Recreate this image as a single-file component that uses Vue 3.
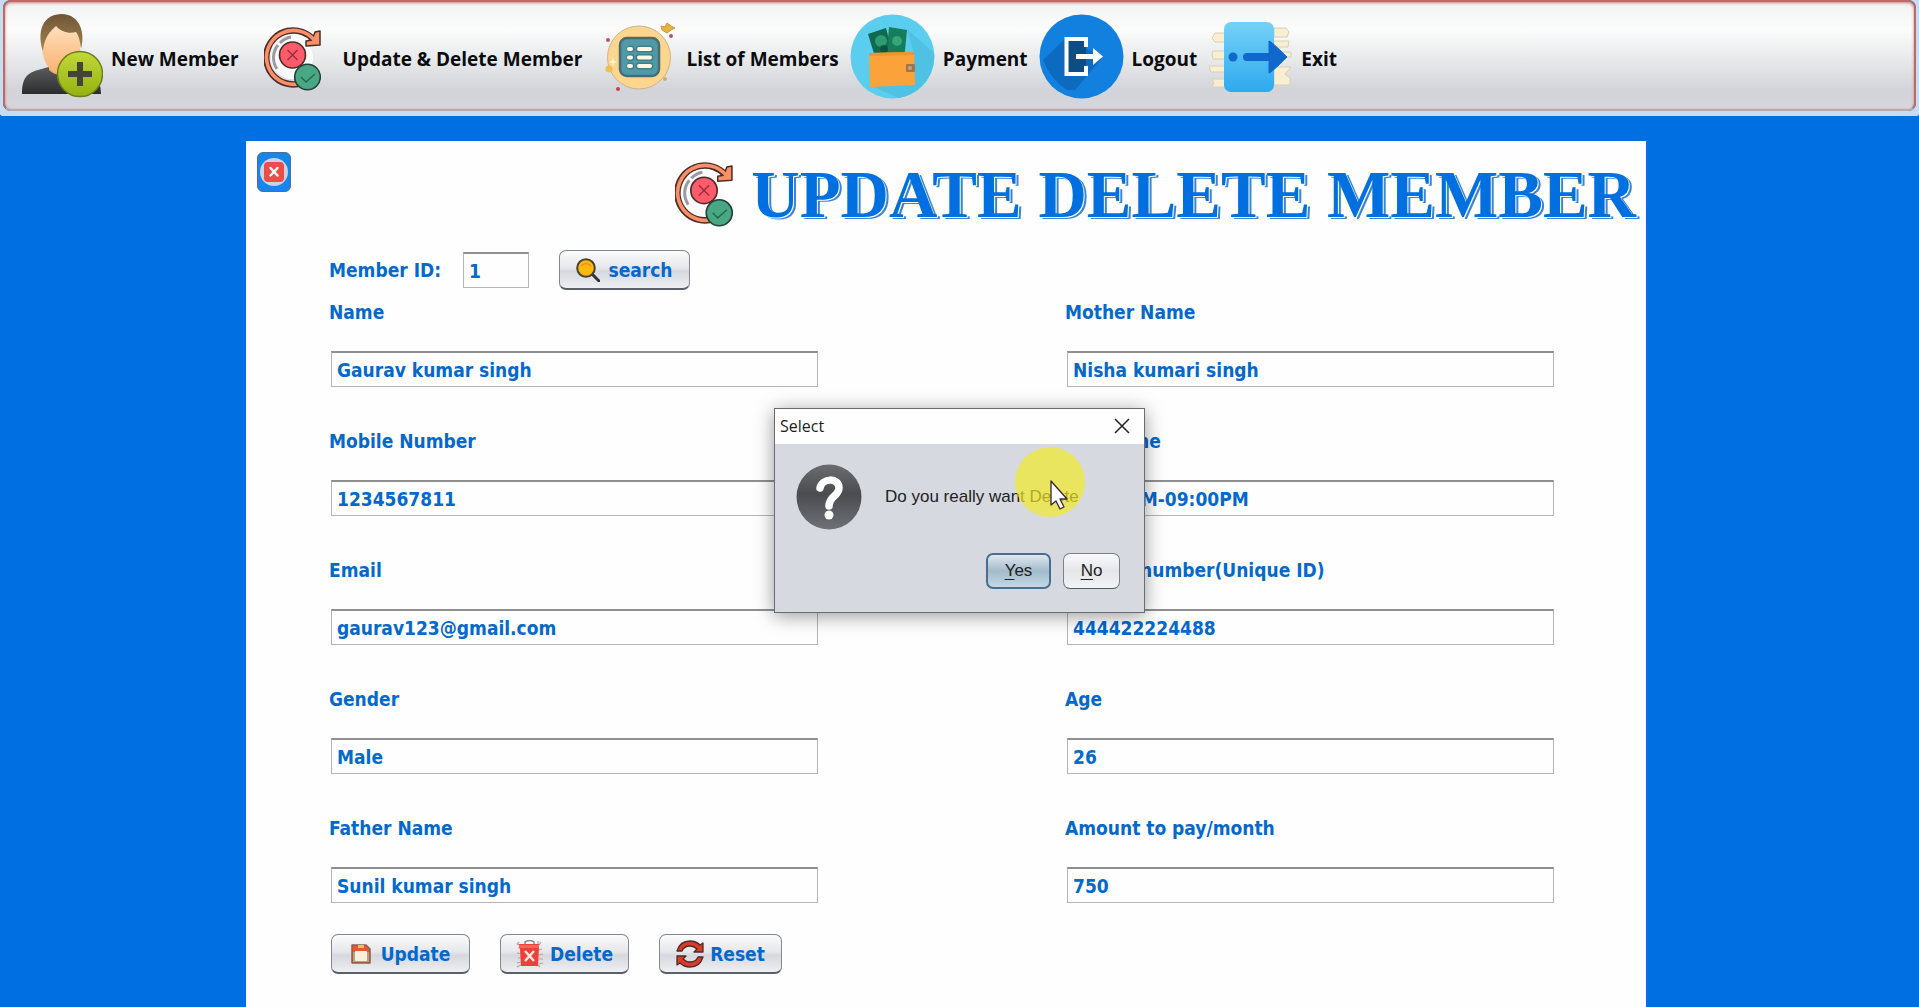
<script setup>
import { ref } from 'vue'

const menu = [
  { id: 'new', label: 'New Member' },
  { id: 'update', label: 'Update & Delete Member' },
  { id: 'list', label: 'List of Members' },
  { id: 'payment', label: 'Payment' },
  { id: 'logout', label: 'Logout' },
  { id: 'exit', label: 'Exit' },
]

const memberId = ref('1')
const fields = ref([
  { id: 'name', label: 'Name', value: 'Gaurav kumar singh' },
  { id: 'mother', label: 'Mother Name', value: 'Nisha kumari singh' },
  { id: 'mobile', label: 'Mobile Number', value: '1234567811' },
  { id: 'time', label: 'Gym Time', value: '06:00AM-09:00PM' },
  { id: 'email', label: 'Email', value: 'gaurav123@gmail.com' },
  { id: 'aadhar', label: 'Aadhar number(Unique ID)', value: '444422224488' },
  { id: 'gender', label: 'Gender', value: 'Male' },
  { id: 'age', label: 'Age', value: '26' },
  { id: 'father', label: 'Father Name', value: 'Sunil kumar singh' },
  { id: 'amount', label: 'Amount to pay/month', value: '750' },
])
</script>

<template>
  <div class="app">
    <svg class="defs" aria-hidden="true">
      <defs>
        <linearGradient id="hair" x1="0" y1="0" x2="0" y2="1"><stop offset="0" stop-color="#6f5638" /><stop offset="1" stop-color="#a5834f" /></linearGradient>
        <linearGradient id="skin" x1="0" y1="0" x2="0" y2="1"><stop offset="0" stop-color="#ffe0bd" /><stop offset="1" stop-color="#f9b070" /></linearGradient>
        <linearGradient id="suit" x1="0" y1="0" x2="0" y2="1"><stop offset="0" stop-color="#5e5f61" /><stop offset="1" stop-color="#2b2c2e" /></linearGradient>
        <linearGradient id="plus" x1="0" y1="0" x2="0" y2="1"><stop offset="0" stop-color="#c3d838" /><stop offset="1" stop-color="#93b210" /></linearGradient>
        <linearGradient id="door" x1="0" y1="0" x2="0" y2="1"><stop offset="0" stop-color="#74d2f7" /><stop offset="1" stop-color="#2fa9ee" /></linearGradient>
        <linearGradient id="ask" x1="0" y1="0" x2="0" y2="1"><stop offset="0" stop-color="#6b6c6f" /><stop offset="0.45" stop-color="#4b4c50" /><stop offset="1" stop-color="#6d7076" /></linearGradient>
        <symbol id="refresh" viewBox="0 0 57 64">
          <circle cx="28" cy="31" r="21" fill="#fbfbfb" />
          <path d="M13 42a20 20 0 0 1 1-24M16 16a19 19 0 0 1 11-6" fill="none" stroke="#9a9ca2" stroke-width="3" />
          <path d="M34 57A27 27 0 1 1 49 12" fill="none" stroke="#4a2c29" stroke-width="6.500" />
          <path d="M51 5l5-1v14l-14 1v-5l6-1z" fill="#fa8f68" stroke="#4a2c29" stroke-width="1.500" stroke-linejoin="round" />
          <path d="M34 57A27 27 0 1 1 51 14" fill="none" stroke="#fa8f68" stroke-width="3.600" />
          <circle cx="28.500" cy="28" r="13" fill="#fb5b6b" stroke="#4a2c29" stroke-width="1.600" />
          <path d="M23.500 23l10 10m0-10l-10 10" stroke="#9c2b3b" stroke-width="1.400" />
          <circle cx="43.500" cy="50" r="12.800" fill="#48a883" stroke="#243e38" stroke-width="1.600" />
          <path d="M37 50l5 5 9-8" fill="none" stroke="#246b52" stroke-width="1.500" />
        </symbol>
      </defs>
    </svg>

    <nav class="toolbar" aria-label="Main menu">
      <button v-for="m in menu" :key="m.id" type="button" class="menu">
        <svg class="menu-icon" viewBox="0 0 85 85" aria-hidden="true">
          <g v-if="m.id === 'new'">
            <path d="M4 80c0-16 5-21 16-24l14-4h13l14 4c14 3 22 8 22 24z" fill="url(#suit)" />
            <path d="M31 48h20v8q-10 9-20 0z" fill="#f5ae70" />
            <path d="M24 18q19-14 38 0v18c-2 14-9 24-19 24s-17-10-19-24z" fill="url(#skin)" />
            <path d="M25 37c-5-14-4-36 18-37 21 0 24 22 20 35-1-8-2-13-5-17-7 2-15 0-20-6-5 5-11 9-13 25z" fill="url(#hair)" />
            <circle cx="62" cy="60" r="22.500" fill="url(#plus)" stroke="#6c7e1b" stroke-width="1.500" />
            <path d="M62 48v24M50 60h24" stroke="#444536" stroke-width="6" />
          </g>
          <use v-else-if="m.id === 'update'" href="#refresh" x="14" y="13" width="57" height="64" />
          <g v-else-if="m.id === 'list'">
            <circle cx="46" cy="43.500" r="31.500" fill="#fbd68f" stroke="#cdb38a" stroke-width="1" />
            <rect x="27" y="24" width="39" height="38" rx="7" fill="#4f9aa6" stroke="#4c6a72" stroke-width="2.500" />
            <path d="M37 35h1m8 0h11M37 43.500h1m8 0h11M37 52h1m8 0h11" fill="none" stroke="#3f7f8c" stroke-width="7" stroke-linecap="round" />
            <path d="M36 35h2m8 0h11M36 43.500h2m8 0h11M36 52h2m8 0h11" fill="none" stroke="#fff7e4" stroke-width="4" stroke-linecap="round" />
            <path d="M74 9l4 3 4 2-4 2-4 3-5-3-1-4 4 1z" fill="#e9b339" stroke="#c39a45" stroke-width="1" />
            <circle cx="16" cy="55" r="3.500" fill="#efbf52" />
            <circle cx="15" cy="26" r="2" fill="#b65560" /><circle cx="78" cy="22" r="2" fill="#b65560" />
            <circle cx="25" cy="75" r="2" fill="#c0454e" /><circle cx="72" cy="65" r="2" fill="#d5ac67" />
            <path d="M20 43l1 4 3 1-3 1-1 4-1-4-3-1 3-1z" fill="#fff6dd" />
          </g>
          <g v-else-if="m.id === 'payment'">
            <circle cx="42.500" cy="42.500" r="42" fill="#5bcdee" />
            <path d="M57 15l27 24a42 42 0 0 1-35 45L22 72l42-33z" fill="#45b9dc" opacity=".55" />
            <path d="M18 20l18-6 8 30-18 2z" fill="#10694f" /><path d="M39 13l18 3-3 31-18-1z" fill="#157d5b" />
            <circle cx="31" cy="27" r="6" fill="#2d9b70" /><circle cx="47" cy="27" r="5" fill="#36a678" /><circle cx="34" cy="35" r="4" fill="#0b5641" />
            <path d="M19 39l45-1 1 33-45 2z" fill="#fba23a" />
            <path d="M19 39l45-1v3l-45 1z" fill="#ee9430" />
            <rect x="56" y="50" width="9" height="8" rx="1" fill="#9d7650" /><circle cx="60" cy="54" r="2" fill="#c9a27b" />
          </g>
          <g v-else-if="m.id === 'logout'">
            <circle cx="42.500" cy="42.500" r="42" fill="#1280df" />
            <path d="M27 24L4 46q8 20 24 30l8 0 28-33z" fill="#0b5fae" opacity=".65" />
            <path d="M27 25h20v36H27z" fill="#0d4d86" />
            <path d="M47 33v-8H27.500v35H47v-8" fill="none" stroke="#fff" stroke-width="4" />
            <path d="M37 42.500h20" stroke="#fff" stroke-width="5" /><path d="M54 34l10 8.500L54 51z" fill="#fff" />
          </g>
          <g v-else>
            <path d="M7 19h10v9H7l-3-4zM5 37h12v8H5l-1-4zM1 52h16v6H3zM4 65h13v8H4l2-4zM66 14h12l3 4-2 5H66zM66 27h15l-1 6H66zM66 38h17v5H66zM66 53h17l-6 7 5 4v7H66z" fill="#f8efd2" stroke="#d8cfb4" stroke-width="1" />
            <rect x="16" y="8" width="50" height="70" rx="7" fill="url(#door)" />
            <circle cx="25" cy="43" r="4.500" fill="#1067cc" /><path d="M39 43h27" stroke="#1067cc" stroke-width="8" stroke-linecap="round" />
            <path d="M61 27q2 0 18 16Q63 59 61 59z" fill="#1067cc" stroke="#1067cc" stroke-width="1" />
          </g>
        </svg>
        <span>{{ m.label }}</span>
      </button>
    </nav>

    <div class="stage">
      <main class="panel">
        <header class="panel-head">
          <button type="button" class="close" aria-label="Close form">
            <svg viewBox="0 0 28 28" aria-hidden="true"><circle cx="14" cy="14" r="14" fill="#c9d3e2" /><rect x="4" y="4" width="20" height="20" rx="4" fill="#ee4b4b" /><path d="M10.500 10l7 7.500m0-7.500l-7 7.500" stroke="#fff" stroke-width="2.500" stroke-linecap="round" /></svg>
          </button>
          <div class="title">
            <svg class="title-icon" aria-hidden="true"><use href="#refresh" /></svg>
            <h1>UPDATE DELETE MEMBER</h1>
          </div>
        </header>

        <form class="form" @submit.prevent>
          <div class="lookup">
            <label for="member-id">Member ID:</label>
            <input id="member-id" v-model="memberId" class="box id-box" type="text" />
            <button type="button" class="btn search">
              <svg class="i-search" viewBox="0 0 24 24" aria-hidden="true"><path d="M16 16l7 7" stroke="#333" stroke-width="3" stroke-linecap="round" /><circle cx="10" cy="10" r="8.800" fill="#fbb90c" stroke="#4a4330" stroke-width="2" /><path d="M5 8q5-5 10 0" fill="none" stroke="#f0863c" stroke-width="1.500" /></svg>
              search
            </button>
          </div>

          <div class="fields">
            <div v-for="f in fields" :key="f.id" class="field">
              <label :for="f.id">{{ f.label }}</label>
              <input :id="f.id" v-model="f.value" class="box" type="text" />
            </div>
          </div>

          <div class="actions">
            <button type="button" class="btn update">
              <svg class="i-disk" viewBox="0 0 20 20" aria-hidden="true"><path d="M1 1h14l4 4v14H1z" fill="#df5a3b" stroke="#8c6048" stroke-width="1.500" stroke-linejoin="round" /><path d="M2 8h16v10H2z" fill="#b9a083" /><rect x="4" y="7" width="12" height="10" rx="1" fill="#f7f1dc" /><rect x="7" y="1" width="6" height="3" fill="#f8bd55" /></svg>
              Update
            </button>
            <button type="button" class="btn delete">
              <svg class="i-bin" viewBox="0 0 28 28" aria-hidden="true"><path d="M9 4V2q5-3 9 0v2" fill="none" stroke="#888" stroke-width="1.500" /><path d="M3 2l-2 2 3 1M2 8h3m-4 5l4 1m-3 4h3m-4 5l4-1m-4 5l4-2M22 1v4m3-3l-2 3m3 4l-3 1m4 4l-4 1m4 4h-4m4 4l-4 1m1 3l-2-2" fill="none" stroke="#b7a4a2" stroke-width="1.200" /><path d="M3 4h20v5l-1 17H5L4 9z" fill="#ee4038" /><path d="M3 5h20v3H3z" fill="#f5635a" /><path d="M9 11l9 10m0-10l-9 10" stroke="#ffe9e6" stroke-width="2.500" /></svg>
              Delete
            </button>
            <button type="button" class="btn reset">
              <svg class="i-reset" viewBox="0 0 28 28" aria-hidden="true"><g fill="#d93b2b" stroke="#4d2c29" stroke-width="1.300" stroke-linejoin="round"><path d="M1 11Q4 1 14 1q6 0 10 4l3-2v9H18l3-3q-3-3-7-3-6 0-8 5z" /><path d="M27 17q-3 10-13 10-6 0-10-4l-3 2v-9h9l-3 3q3 3 7 3 6 0 8-5z" /></g></svg>
              Reset
            </button>
          </div>
        </form>
      </main>
    </div>

    <section class="dialog" role="dialog" aria-labelledby="dlg-title">
      <header class="dialog-bar">
        <span id="dlg-title">Select</span>
        <button type="button" class="dialog-x" aria-label="Close dialog">
          <svg viewBox="0 0 16 16" aria-hidden="true"><path d="M1 1l14 14M15 1L1 15" stroke="#222" stroke-width="1.500" /></svg>
        </button>
      </header>
      <div class="dialog-msg">
        <svg class="ask" viewBox="0 0 66 66" aria-hidden="true"><circle cx="33" cy="33" r="32.500" fill="url(#ask)" /><path d="M24 24c2-10 19-11 19 0 0 8-10 8-10 18" fill="none" stroke="#fff" stroke-width="7.500" stroke-linecap="round" stroke-linejoin="round" /><circle cx="33" cy="51" r="4.500" fill="#fff" /></svg>
        <p>Do you really want Delete</p>
      </div>
      <div class="dialog-actions">
        <button type="button" class="dlg-btn yes"><u>Y</u>es</button>
        <button type="button" class="dlg-btn no"><u>N</u>o</button>
      </div>
      <svg class="pointer" viewBox="0 0 70 70" aria-hidden="true">
        <circle cx="35" cy="35" r="35" fill="#f3ea20" opacity=".68" />
        <path d="M36 34v24l5-4 4 8 4-2-4-8h7z" fill="#fff" stroke="#3a2330" stroke-width="1.300" stroke-linejoin="round" />
      </svg>
    </section>
  </div>
</template>

<style>
body {
  margin: 0;
}
</style>

<style scoped>
* {
  box-sizing: border-box;
}
.app {
  position: relative;
  display: flex;
  flex-direction: column;
  min-height: 100vh;
  background: #006fe1;
  color: #0468cd;
  font: bold 19px/28px "DejaVu Sans Condensed", "Noto Sans", sans-serif;
}
button {
  margin: 0;
  padding: 0;
  border: 0;
  background: none;
  font: inherit;
  color: inherit;
}
svg {
  display: block;
}
.defs {
  position: absolute;
  width: 0;
  height: 0;
}
.toolbar {
  display: flex;
  align-items: center;
  gap: 11px;
  height: 111px;
  margin: 0 3px 5px;
  padding: 2px 15px 0 13px;
  border: 2px solid #bc6a63;
  border-bottom-color: #bcaaa8;
  border-radius: 8px;
  background: linear-gradient(#f1f2f2, #fbfcfb 26%, #e4e6e8 58%, #d2d4da 82%, #d6d6da);
  box-shadow: 0 0 0 8px #c8dcf2, inset 0 1px 3px #c9827c;
}
.menu {
  display: flex;
  align-items: center;
  gap: 8px;
  color: #0c0c0e;
  font-family: "Open Sans", sans-serif;
  white-space: nowrap;
}
.menu-icon {
  width: 85px;
  height: 85px;
}
.menu span {
  padding-top: 4px;
}
.stage {
  flex: 1;
  display: flex;
  position: relative;
  padding: 25px 273px 0 246px;
  background: #006fe1;
}
.panel {
  flex: 1;
  display: flex;
  flex-direction: column;
  background: #fdfefd;
}
.panel-head {
  display: flex;
  justify-content: space-between;
  align-items: flex-start;
  height: 108px;
  padding: 11px 10px 0 11px;
}
.close {
  display: grid;
  place-items: center;
  width: 34px;
  height: 40px;
  border: 1px solid #4a6f9c;
  border-radius: 6px;
  background: #1785ec;
}
.close svg {
  width: 28px;
  height: 28px;
}
.title {
  display: flex;
  gap: 18px;
  padding-top: 10px;
}
.title-icon {
  width: 58px;
  height: 65px;
}
h1 {
  margin: 0;
  font: bold 67px/64px "Liberation Serif", serif;
  color: #0070e0;
  text-shadow: 1px 1px 0 #fdfefd, 3px 2px 0 #3a86d6;
  white-space: nowrap;
}
.form {
  padding: 0 92px 34px 85px;
}
.lookup {
  display: flex;
  align-items: center;
  height: 42px;
}
.lookup label {
  width: 134px;
}
.box {
  width: 100%;
  height: 36px;
  padding: 0 5px;
  border: 1px solid #b4b6b6;
  border-top: 2px solid #8e9090;
  border-radius: 0;
  outline: 0;
  background: #fdfefd;
  color: inherit;
  font: inherit;
}
.id-box {
  width: 66px;
}
.btn {
  display: flex;
  align-items: center;
  justify-content: center;
  height: 40px;
  border: 1px solid #85888f;
  border-bottom: 2px solid #5b5f66;
  border-radius: 7px;
  background: linear-gradient(#fbfbfc, #e6e7eb 45%, #d6d8de 55%, #eeeff2);
}
.search {
  width: 131px;
  margin-left: 30px;
  gap: 8px;
}
.i-search {
  width: 24px;
  height: 24px;
}
.fields {
  display: grid;
  grid-template-columns: 1fr 1fr;
  column-gap: 249px;
  row-gap: 40px;
  padding-top: 7px;
}
.field {
  display: grid;
  row-gap: 25px;
}
.field label,
.lookup label {
  margin-left: -2px;
}
.actions {
  display: flex;
  gap: 30px;
  padding-top: 31px;
}
.update {
  width: 139px;
  gap: 10px;
}
.delete {
  width: 129px;
  gap: 6px;
}
.reset {
  width: 123px;
  gap: 6px;
}
.i-disk {
  width: 20px;
  height: 20px;
}
.i-bin,
.i-reset {
  width: 28px;
  height: 28px;
}
.dialog {
  position: absolute;
  left: 774px;
  top: 408px;
  width: 371px;
  border: 1px solid #6a6c70;
  background: #d6d9e0;
  color: #222;
  font: 16px/20px "Liberation Sans", sans-serif;
  box-shadow: 0 3px 18px rgba(0, 0, 0, 0.4);
}
.dialog-bar {
  display: flex;
  align-items: center;
  justify-content: space-between;
  height: 35px;
  padding: 0 14px 2px 5px;
  background: #fdfefd;
  font-family: "Open Sans", sans-serif;
}
.dialog-x svg {
  width: 16px;
  height: 16px;
}
.dialog-msg {
  display: flex;
  align-items: center;
  gap: 23px;
  padding: 20px 0 0 21px;
}
.dialog-msg p {
  margin: 0;
  font-size: 17px;
}
.ask {
  width: 66px;
  height: 66px;
}
.dialog-actions {
  display: flex;
  justify-content: flex-end;
  gap: 12px;
  padding: 23px 24px 23px 0;
}
.dlg-btn {
  height: 36px;
  border: 1px solid #7c8087;
  border-bottom-color: #555a62;
  border-radius: 7px;
  background: linear-gradient(#fbfbfc, #e3e5ea 50%, #f3f4f6);
  font-size: 17px;
}
.dlg-btn u {
  text-underline-offset: 3px;
}
.yes {
  width: 65px;
  border: 2px solid #486f92;
  background: linear-gradient(#dfe8f0, #a3bacb 50%, #c2d8e6);
}
.no {
  width: 57px;
}
.pointer {
  position: absolute;
  left: 240px;
  top: 38px;
  width: 70px;
  height: 70px;
}
</style>
